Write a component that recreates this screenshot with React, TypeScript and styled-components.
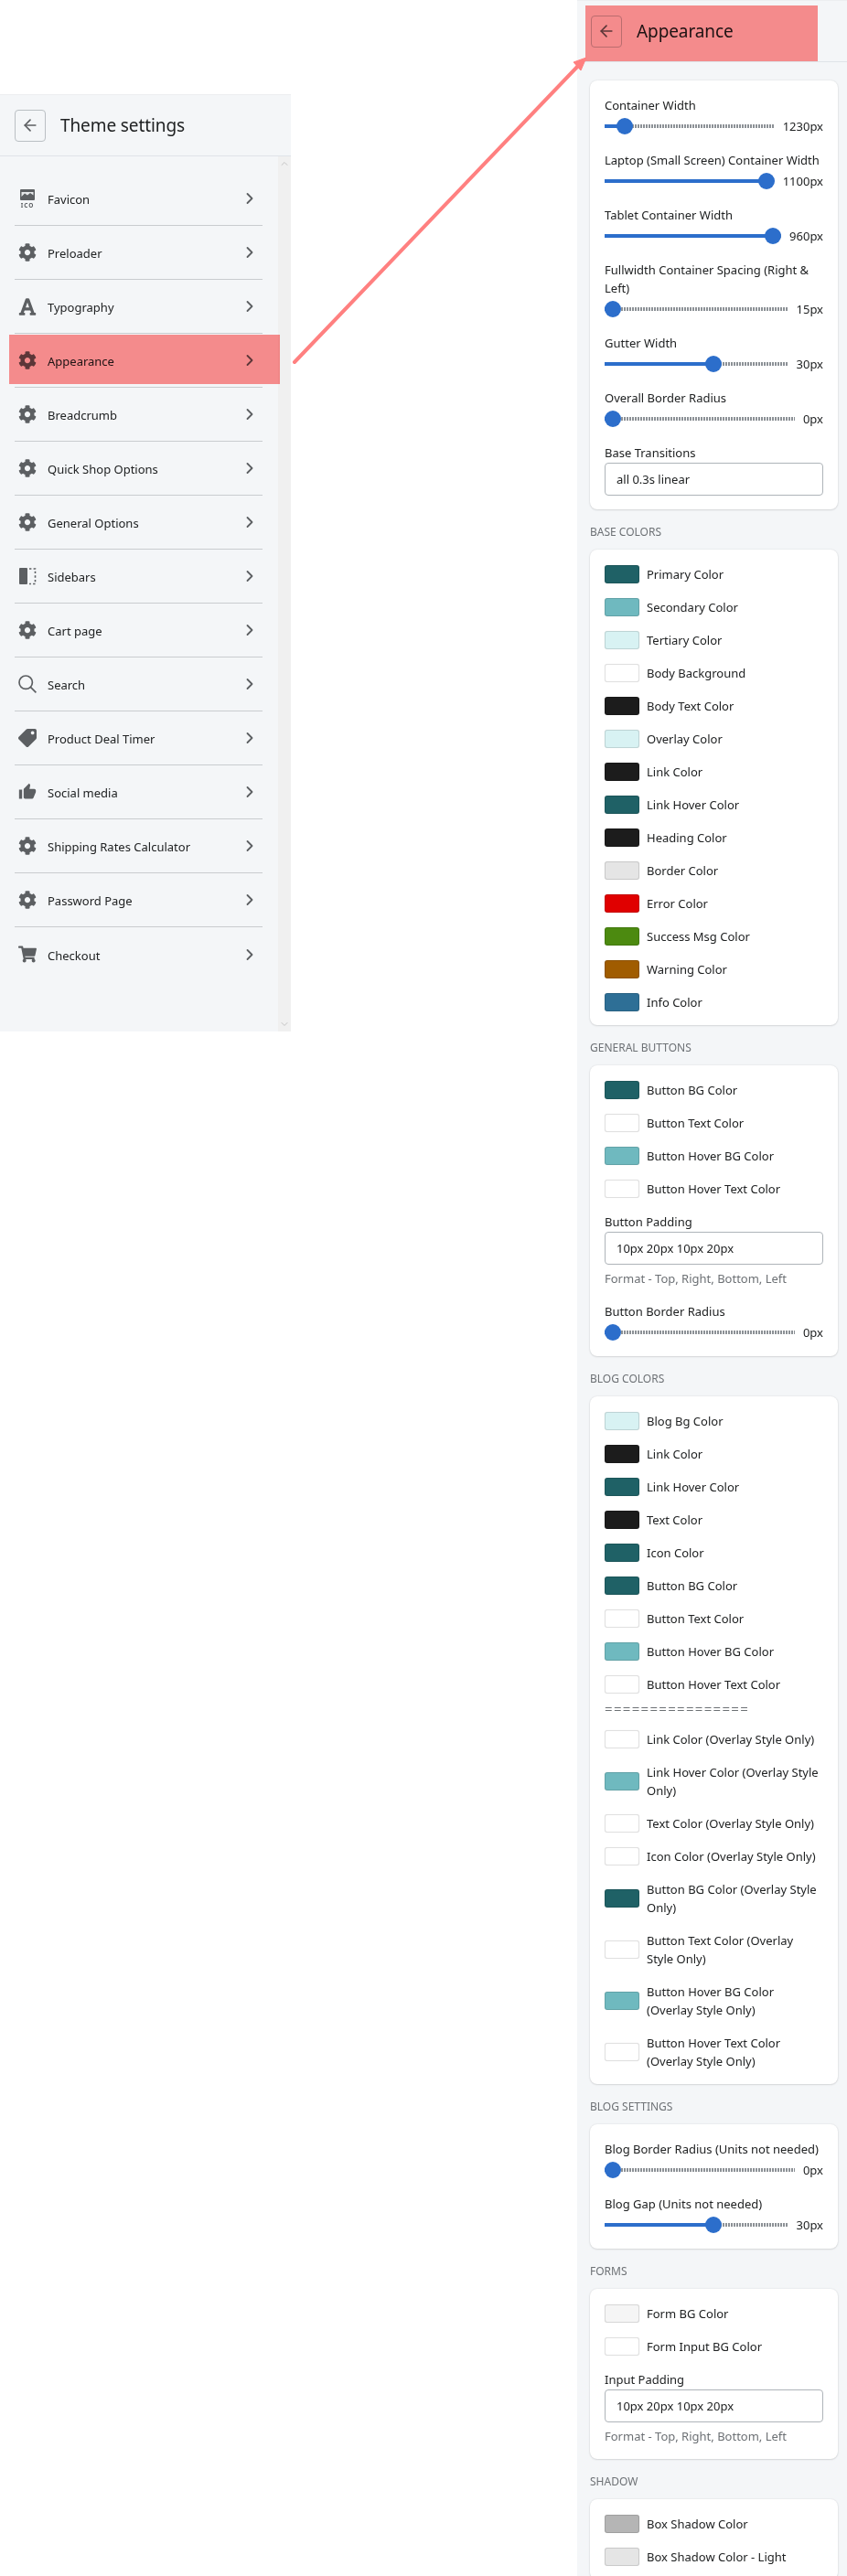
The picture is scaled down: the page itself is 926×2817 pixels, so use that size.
import styled, { createGlobalStyle } from 'styled-components'
import { ReactNode } from 'react'
import { ArrowLeft, ChevronRight, ChevronUp, ChevronDown } from 'lucide-react'
import { FaCog, FaFont, FaTag, FaShoppingCart } from 'react-icons/fa'
import { MdThumbUp } from 'react-icons/md'

const GlobalStyle = createGlobalStyle`
  html, body {
    margin: 0;
    padding: 0;
    background: #fff;
  }
  body {
    font-family: "Noto Sans", "Open Sans", sans-serif;
    font-size: 13px;
    line-height: 20px;
    color: #202223;
  }
  * {
    box-sizing: border-box;
  }
`

const Page = styled.div`
  position: relative;
  width: 926px;
  height: 2817px;
  display: flex;
  justify-content: space-between;
  align-items: flex-start;
  overflow: hidden;
`

const ArrowSvg = styled.svg`
  position: absolute;
  top: 0;
  left: 0;
  pointer-events: none;
`

const LeftPanel = styled.div`
  width: 318px;
  height: 1025px;
  margin-top: 103px;
  display: flex;
  flex-direction: column;
  background: #f4f6f8;
`

const RightPanel = styled.div`
  width: 295px;
  height: 2817px;
  overflow: hidden;
  background: #f4f6f8;
`

const Header = styled.div<{ $marked?: boolean }>`
  position: relative;
  flex: none;
  height: 68px;
  display: flex;
  align-items: center;
  gap: 16px;
  padding-left: ${p => (p.$marked ? 15 : 16)}px;
  border-top: 1px solid #eceef0;
  border-bottom: 1px solid #dfe3e8;
  ${p =>
    p.$marked &&
    `&::after {
      content: '';
      position: absolute;
      left: 9px;
      top: 5px;
      width: 254px;
      height: 61px;
      background: #ff9090;
      mix-blend-mode: multiply;
    }`}
`

const BackBtn = styled.div`
  width: 34px;
  height: 35px;
  display: flex;
  align-items: center;
  justify-content: center;
  border: 1px solid #babfc3;
  border-radius: 4px;
  color: #5c5f62;
`

const Title = styled.div`
  font-size: 19px;
  line-height: 28px;
  letter-spacing: -0.1px;
  color: #202223;
`

const ListWrap = styled.div`
  flex: 1;
  display: flex;
  min-height: 0;
`

const List = styled.div`
  flex: 1;
  padding: 17px 17px 0 16px;
`

const Scrollbar = styled.div`
  flex: none;
  width: 14px;
  display: flex;
  flex-direction: column;
  justify-content: space-between;
  align-items: center;
  padding: 2px 0;
  background: #f0f0f0;
  color: #c4c4c4;
`

const MenuRow = styled.div<{ $marked?: boolean }>`
  position: relative;
  height: 59px;
  display: flex;
  align-items: center;
  padding: 0 4px;
  border-bottom: 1px solid #c9cccf;
  &:last-child {
    border-bottom: none;
  }
  ${p =>
    p.$marked &&
    `&::after {
      content: '';
      position: absolute;
      left: -6px;
      right: -19px;
      top: 1px;
      height: 54px;
      background: #ff9090;
      mix-blend-mode: multiply;
    }`}
`

const MenuIcon = styled.div`
  width: 20px;
  height: 20px;
  flex: none;
  display: flex;
  align-items: center;
  justify-content: center;
  color: #5c5f62;
`

const MenuText = styled.div`
  flex: 1;
  margin-left: 12px;
  padding-top: 2px;
`

const Chevron = styled(ChevronRight)`
  flex: none;
  color: #5c5f62;
`

const Body = styled.div`
  padding: 20px 10px 0 14px;
`

const Section = styled.div`
  margin: 15px 0 9px;
  font-size: 12px;
  line-height: 20px;
  color: #6d7175;
  text-transform: uppercase;
`

const Card = styled.div`
  padding: 17px 16px 15px;
  display: flex;
  flex-direction: column;
  gap: 16px;
  background: #fff;
  border-radius: 8px;
  box-shadow: 0 0 2px rgba(23, 24, 24, 0.12), 0 1px 2px rgba(23, 24, 24, 0.1);
`

const FieldLabel = styled.div`
  margin-bottom: 1px;
`

const SliderRow = styled.div`
  margin-top: 2px;
  height: 22px;
  display: flex;
  align-items: center;
`

const Track = styled.div`
  position: relative;
  flex: 1;
  height: 4px;
  background: repeating-linear-gradient(to right, #8c9196 0 2px, transparent 2px 3px);
`

const TrackFill = styled.div`
  height: 100%;
  background: #2c6ecb;
`

const Thumb = styled.div`
  position: absolute;
  top: -7px;
  width: 18px;
  height: 18px;
  border-radius: 50%;
  background: #2c6ecb;
`

const SliderValue = styled.div`
  flex: none;
  margin-left: 9px;
`

const TextBox = styled.div`
  height: 36px;
  display: flex;
  align-items: center;
  padding: 0 12px;
  border: 1px solid #aeb4b9;
  border-radius: 4px;
`

const HelpText = styled.div`
  margin-top: 5px;
  color: #6d7175;
`

const ColorRow = styled.div`
  display: flex;
  align-items: center;
  gap: 8px;
`

const ColorLabel = styled.div`
  max-width: 189px;
`

const Swatch = styled.div<{ $color: string }>`
  flex: none;
  width: 38px;
  height: 20px;
  border-radius: 3px;
  background: ${p => p.$color};
  border: 1px solid rgba(0, 0, 0, 0.12);
  box-shadow: 0 0 1px rgba(0, 0, 0, 0.1);
`

const Rule = styled.div`
  margin: -10px 0 -2px;
  font-size: 15px;
  letter-spacing: 1.3px;
  color: #6d7175;
`

const FaviconIcon = () => (
  <svg width="20" height="20" viewBox="0 0 20 20">
    <rect x="2" y="0" width="16" height="12" rx="1" fill="currentColor" />
    <path d="M3.5 8 L7 4.5 L10 6.5 L13 4 L16.5 6.5 V3 H3.5 Z" fill="#f4f6f8" opacity="0.9" />
    <text x="10" y="19.5" textAnchor="middle" fontSize="6.5" fontWeight="700" letterSpacing="1" fill="currentColor">ICO</text>
  </svg>
)

const SidebarIcon = () => (
  <svg width="20" height="20" viewBox="0 0 20 20">
    <rect x="1" y="1" width="9" height="18" rx="1" fill="currentColor" />
    <path d="M12 2 H18.5 V18.5 H12" fill="none" stroke="currentColor" strokeWidth="1.6" strokeDasharray="2.4 2.2" />
  </svg>
)

const SearchIcon = () => (
  <svg width="20" height="20" viewBox="0 0 20 20" fill="none" stroke="currentColor" strokeWidth="1.7">
    <circle cx="8.2" cy="8.2" r="7.2" />
    <line x1="13.4" y1="13.4" x2="19.4" y2="19.4" />
  </svg>
)

const Gear = <FaCog size={20} />

const menu: { label: string; icon: ReactNode; marked?: boolean }[] = [
  { label: 'Favicon', icon: <FaviconIcon /> },
  { label: 'Preloader', icon: Gear },
  { label: 'Typography', icon: <FaFont size={21} /> },
  { label: 'Appearance', icon: Gear, marked: true },
  { label: 'Breadcrumb', icon: Gear },
  { label: 'Quick Shop Options', icon: Gear },
  { label: 'General Options', icon: Gear },
  { label: 'Sidebars', icon: <SidebarIcon /> },
  { label: 'Cart page', icon: Gear },
  { label: 'Search', icon: <SearchIcon /> },
  { label: 'Product Deal Timer', icon: <FaTag size={20} style={{ transform: 'scaleX(-1)' }} /> },
  { label: 'Social media', icon: <MdThumbUp size={22} /> },
  { label: 'Shipping Rates Calculator', icon: Gear },
  { label: 'Password Page', icon: Gear },
  { label: 'Checkout', icon: <FaShoppingCart size={21} /> },
]

const Slider = ({ label, value, pos }: { label: string; value: string; pos: number }) => (
  <div>
    <div>{label}</div>
    <SliderRow>
      <Track>
        <TrackFill style={{ width: `calc(${pos * 100}% - ${pos * 18}px + 9px)` }} />
        <Thumb style={{ left: `calc(${pos * 100}% - ${pos * 18}px)` }} />
      </Track>
      <SliderValue>{value}</SliderValue>
    </SliderRow>
  </div>
)

const Field = ({ label, value, help }: { label: string; value: string; help?: boolean }) => (
  <div>
    <FieldLabel>{label}</FieldLabel>
    <TextBox>{value}</TextBox>
    {help && <HelpText>Format - Top, Right, Bottom, Left</HelpText>}
  </div>
)

const Color = ({ label, color }: { label: string; color: string }) => (
  <ColorRow>
    <Swatch $color={color} />
    <ColorLabel>{label}</ColorLabel>
  </ColorRow>
)

const TEAL = '#1f6166'
const AQUA = '#6fb9bf'
const PALE = '#d8f2f3'
const INK = '#1c1c1c'
const WHITE = '#ffffff'

const baseColors: [string, string][] = [
  ['Primary Color', TEAL],
  ['Secondary Color', AQUA],
  ['Tertiary Color', PALE],
  ['Body Background', WHITE],
  ['Body Text Color', INK],
  ['Overlay Color', PALE],
  ['Link Color', INK],
  ['Link Hover Color', TEAL],
  ['Heading Color', INK],
  ['Border Color', '#e5e5e5'],
  ['Error Color', '#e00000'],
  ['Success Msg Color', '#4c8a10'],
  ['Warning Color', '#a05c00'],
  ['Info Color', '#2e6f96'],
]

const buttonColors: [string, string][] = [
  ['Button BG Color', TEAL],
  ['Button Text Color', WHITE],
  ['Button Hover BG Color', AQUA],
  ['Button Hover Text Color', WHITE],
]

const blogColors: [string, string][] = [
  ['Blog Bg Color', PALE],
  ['Link Color', INK],
  ['Link Hover Color', TEAL],
  ['Text Color', INK],
  ['Icon Color', TEAL],
  ['Button BG Color', TEAL],
  ['Button Text Color', WHITE],
  ['Button Hover BG Color', AQUA],
  ['Button Hover Text Color', WHITE],
]

const overlayColors: [string, string][] = [
  ['Link Color (Overlay Style Only)', WHITE],
  ['Link Hover Color (Overlay Style Only)', AQUA],
  ['Text Color (Overlay Style Only)', WHITE],
  ['Icon Color (Overlay Style Only)', WHITE],
  ['Button BG Color (Overlay Style Only)', TEAL],
  ['Button Text Color (Overlay Style Only)', WHITE],
  ['Button Hover BG Color (Overlay Style Only)', AQUA],
  ['Button Hover Text Color (Overlay Style Only)', WHITE],
]

const App = () => {
  return (
    <Page>
      <GlobalStyle />
      <LeftPanel>
        <Header>
          <BackBtn><ArrowLeft size={20} strokeWidth={2} /></BackBtn>
          <Title>Theme settings</Title>
        </Header>
        <ListWrap>
          <List>
            {menu.map(item => (
              <MenuRow key={item.label} $marked={item.marked}>
                <MenuIcon>{item.icon}</MenuIcon>
                <MenuText>{item.label}</MenuText>
                <Chevron size={20} strokeWidth={2.2} />
              </MenuRow>
            ))}
          </List>
          <Scrollbar>
            <ChevronUp size={12} />
            <ChevronDown size={12} />
          </Scrollbar>
        </ListWrap>
      </LeftPanel>

      <RightPanel>
        <Header $marked>
          <BackBtn><ArrowLeft size={20} strokeWidth={2} /></BackBtn>
          <Title>Appearance</Title>
        </Header>
        <Body>
          <Card>
            <Slider label="Container Width" value="1230px" pos={0.078} />
            <Slider label="Laptop (Small Screen) Container Width" value="1100px" pos={1} />
            <Slider label="Tablet Container Width" value="960px" pos={1} />
            <Slider label="Fullwidth Container Spacing (Right & Left)" value="15px" pos={0} />
            <Slider label="Gutter Width" value="30px" pos={0.6} />
            <Slider label="Overall Border Radius" value="0px" pos={0} />
            <Field label="Base Transitions" value="all 0.3s linear" />
          </Card>

          <Section>Base Colors</Section>
          <Card>
            {baseColors.map(([label, color]) => <Color key={label} label={label} color={color} />)}
          </Card>

          <Section>General Buttons</Section>
          <Card>
            {buttonColors.map(([label, color]) => <Color key={label} label={label} color={color} />)}
            <Field label="Button Padding" value="10px 20px 10px 20px" help />
            <Slider label="Button Border Radius" value="0px" pos={0} />
          </Card>

          <Section>Blog Colors</Section>
          <Card>
            {blogColors.map(([label, color]) => <Color key={label} label={label} color={color} />)}
            <Rule>================</Rule>
            {overlayColors.map(([label, color]) => <Color key={label} label={label} color={color} />)}
          </Card>

          <Section>Blog Settings</Section>
          <Card>
            <Slider label="Blog Border Radius (Units not needed)" value="0px" pos={0} />
            <Slider label="Blog Gap (Units not needed)" value="30px" pos={0.6} />
          </Card>

          <Section>Forms</Section>
          <Card>
            <Color label="Form BG Color" color="#f5f5f5" />
            <Color label="Form Input BG Color" color={WHITE} />
            <Field label="Input Padding" value="10px 20px 10px 20px" help />
          </Card>

          <Section>Shadow</Section>
          <Card>
            <Color label="Box Shadow Color" color="#b5b5b5" />
            <Color label="Box Shadow Color - Light" color="#e5e5e5" />
          </Card>
        </Body>
      </RightPanel>

      <ArrowSvg width="926" height="2817" viewBox="0 0 926 2817">
        <line x1="322" y1="396" x2="633" y2="71" stroke="#ff8080" strokeWidth="4" strokeLinecap="round" />
        <polygon points="641,63 627,68 635,77" fill="#ff8080" stroke="#ff8080" strokeWidth="1" />
      </ArrowSvg>
    </Page>
  )
}

export default App
